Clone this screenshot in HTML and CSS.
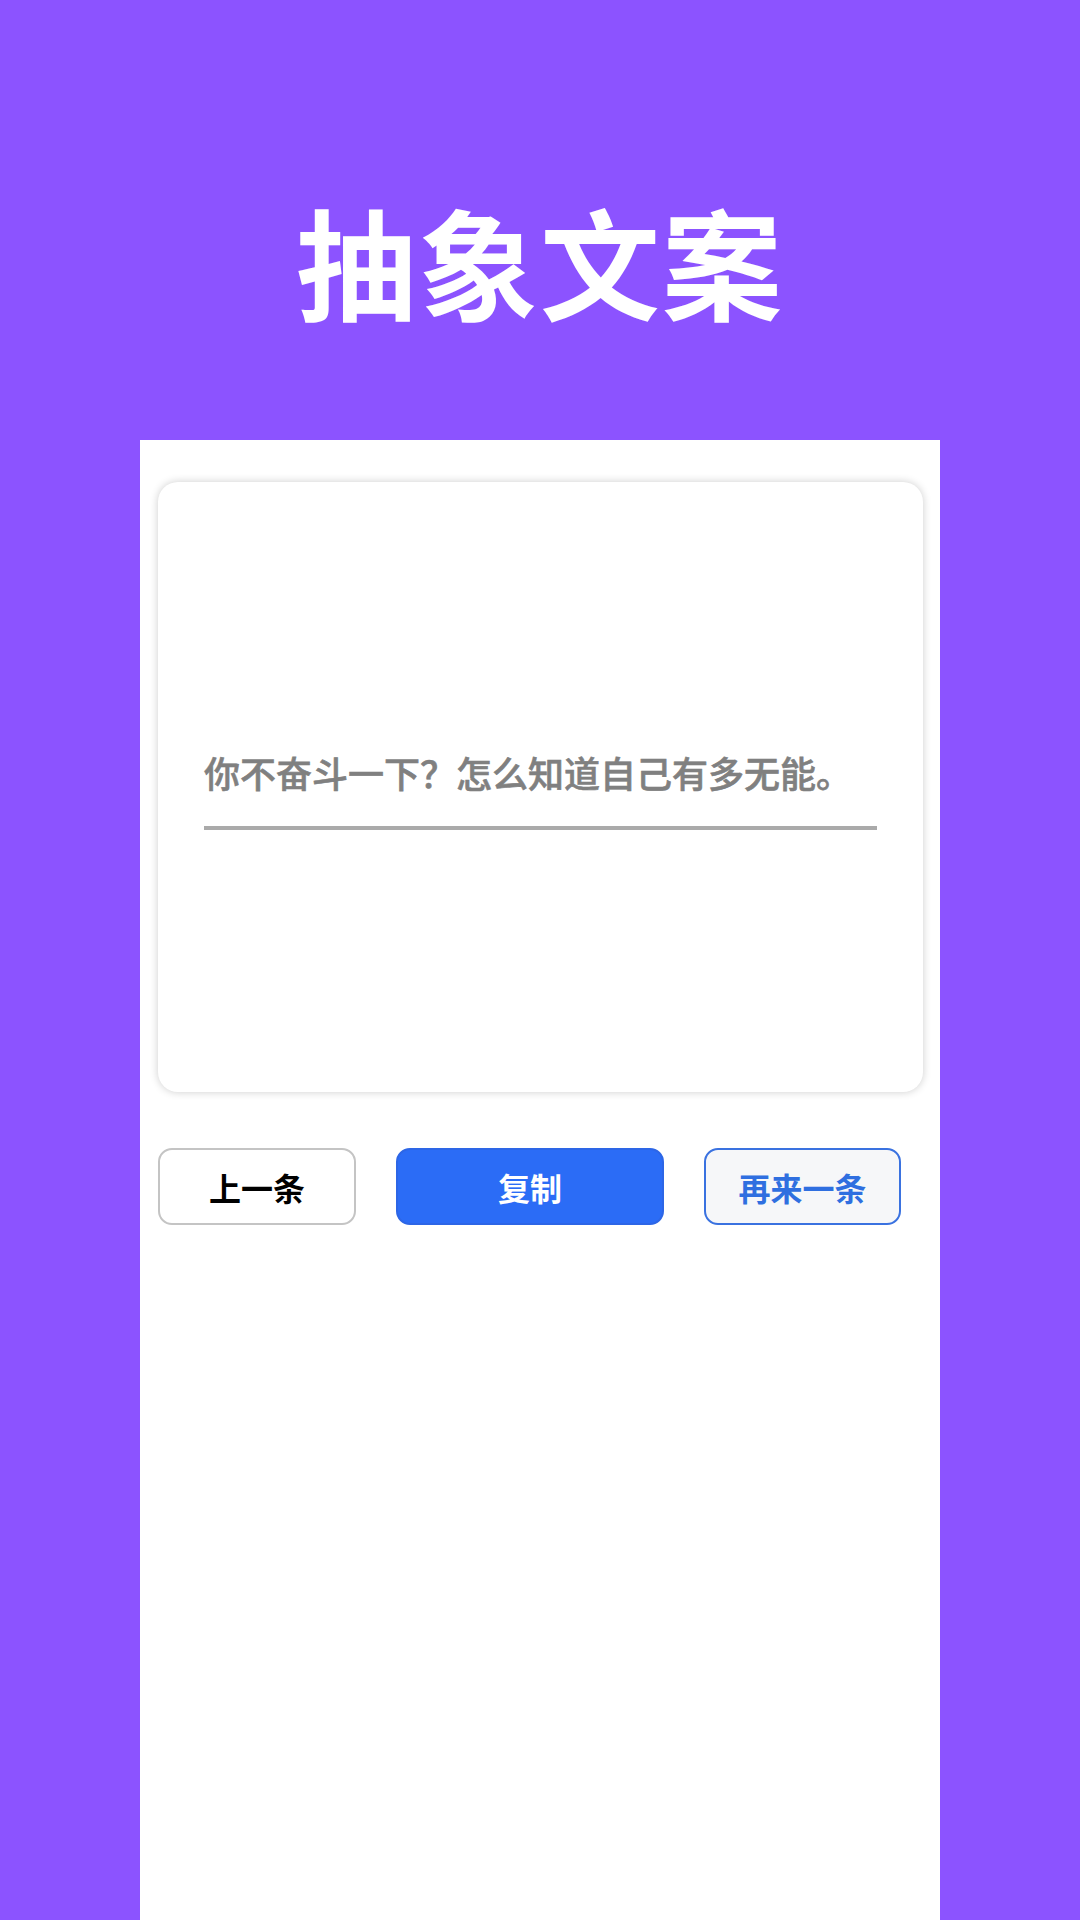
FILE: index.html
```html
<!DOCTYPE html>
<html lang="zh-CN">
<head>
<meta charset="utf-8">
<title>抽象文案</title>
<link rel="stylesheet" href="styles.css">
</head>
<body>
<header class="header">
  <h1 class="title">抽象文案</h1>
</header>
<main class="panel">
  <section class="card">
    <div class="quote">你不奋斗一下？怎么知道自己有多无能。</div>
  </section>
  <div class="actions">
    <button class="btn btn-prev">上一条</button>
    <button class="btn btn-copy">复制</button>
    <button class="btn btn-next">再来一条</button>
  </div>
</main>
</body>
</html>
```
FILE: styles.css
```css
* { box-sizing: border-box; }
html, body { margin: 0; padding: 0; }
body {
  background: #8c53ff;
  font-family: "Noto Sans CJK SC", "Noto Sans", sans-serif;
  width: 1080px;
  height: 1920px;
  overflow: hidden;
}
.header {
  height: 440px;
  display: flex;
  justify-content: center;
  align-items: flex-start;
}
.title {
  margin: 200px 0 0;
  font-size: 120px;
  line-height: 120px;
  font-weight: 700;
  color: #ffffff;
  letter-spacing: 2px;
}
.panel {
  width: 800px;
  margin: 0 auto;
  height: 1480px;
  background: #ffffff;
  padding: 42px 17px 0 18px;
}
.card {
  height: 610px;
  border-radius: 20px;
  background: #ffffff;
  box-shadow: 0 0 9px rgba(0, 0, 0, 0.2);
  display: flex;
  flex-direction: column;
  justify-content: center;
  padding: 0 46px;
}
.quote {
  font-size: 36px;
  line-height: 50px;
  font-weight: 500;
  -webkit-text-stroke: 0.6px #808080;
  color: #808080;
  padding-bottom: 29px;
  margin-top: 3px;
  border-bottom: 4px solid #aaaaaa;
  white-space: nowrap;
}
.actions {
  margin-top: 56px;
  display: flex;
  gap: 40px;
}
.btn {
  height: 77px;
  border-radius: 14px;
  font-family: "Noto Sans CJK SC", sans-serif;
  font-size: 32px;
  font-weight: 700;
  display: flex;
  align-items: center;
  justify-content: center;
  padding: 0;
}
.btn-prev {
  width: 198px;
  background: #ffffff;
  border: 2px solid #c4c4c4;
  color: #000000;
}
.btn-copy {
  width: 268px;
  background: #2b6cf6;
  border: 2px solid #2d66e6;
  color: #ffffff;
}
.btn-next {
  width: 197px;
  background: #f6f7f9;
  border: 2px solid #3a72e0;
  color: #2f6fe0;
}
```
